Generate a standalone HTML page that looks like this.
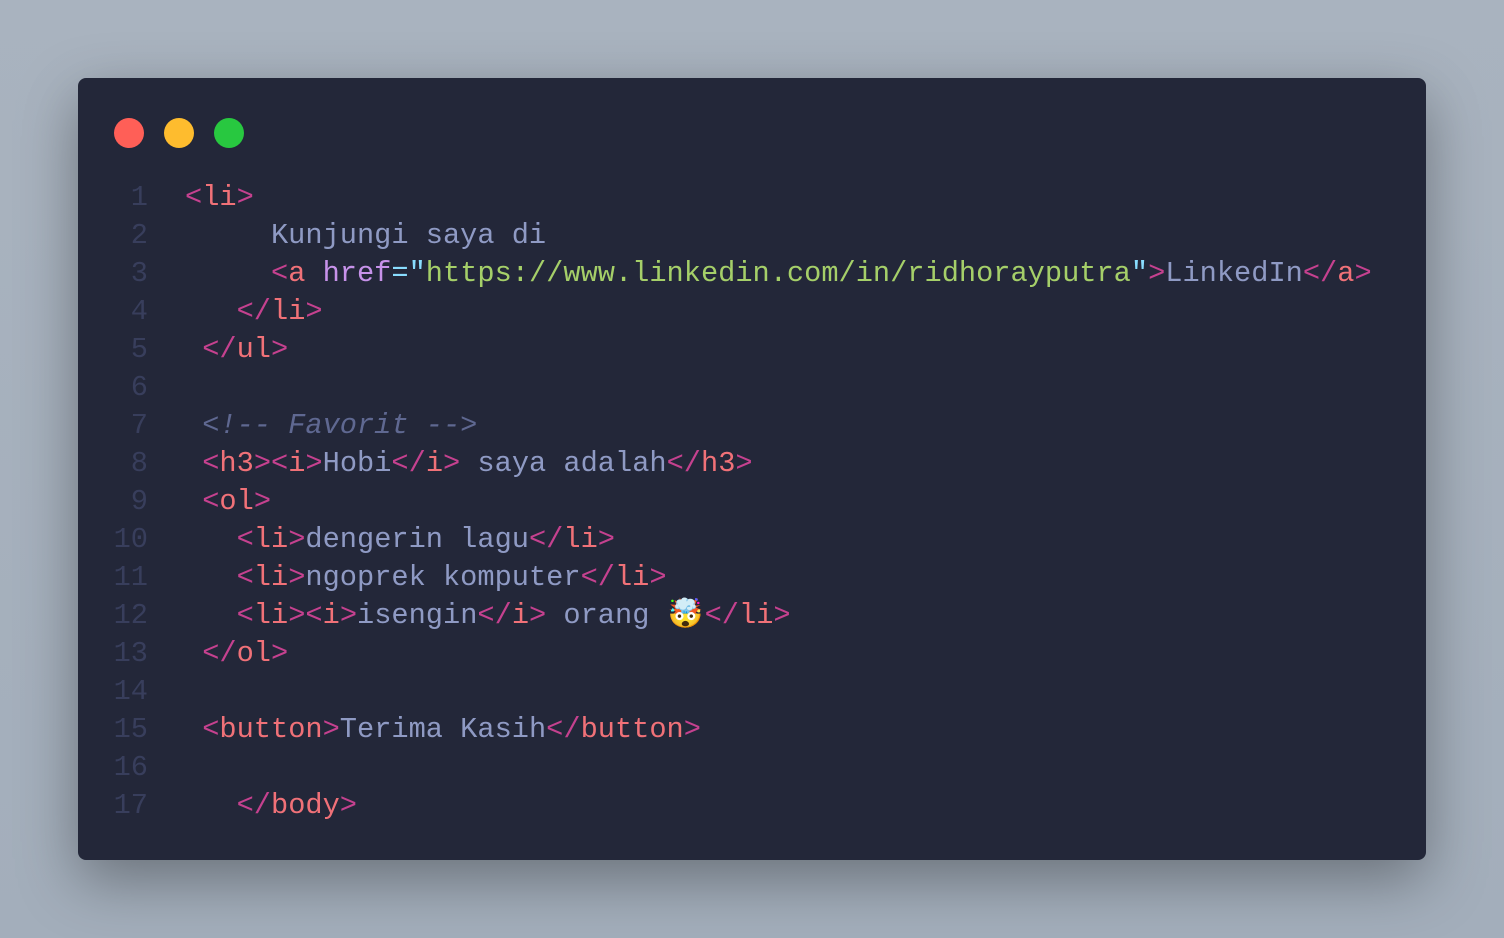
<html><head><style>
body{margin:0;width:1504px;height:938px;background:linear-gradient(180deg,#a9b3bf,#a3aebb);position:relative;overflow:hidden}
.win{position:absolute;left:78px;top:78px;width:1348px;height:782px;background:#232739;border-radius:8px;box-shadow:0 20px 60px rgba(0,0,0,.35)}
.dot{position:absolute;top:40px;width:30px;height:30px;border-radius:50%}
pre{position:absolute;left:0;top:101px;margin:0;font-family:"Liberation Mono",monospace;font-size:28.67px;line-height:38px;color:#8f9ac4}
.n{display:inline-block;width:70px;text-align:right;color:#383e5c;margin-right:37px}
.b{color:#c5418f}.t{color:#f07178}.a{color:#c792ea}.e{color:#89ddff}.s{color:#a5cf69}.c{color:#5f6891;font-style:italic}
</style></head><body><div class="win">
<div class="dot" style="left:36px;background:#ff5f57"></div>
<div class="dot" style="left:86px;background:#febc2e"></div>
<div class="dot" style="left:136px;background:#28c840"></div>
<pre><span class="n">1</span><span class="b">&lt;</span><span class="t">li</span><span class="b">&gt;</span>
<span class="n">2</span>     Kunjungi saya di
<span class="n">3</span>     <span class="b">&lt;</span><span class="t">a</span> <span class="a">href</span><span class="e">="</span><span class="s">https://www.linkedin.com/in/ridhorayputra</span><span class="e">"</span><span class="b">&gt;</span>LinkedIn<span class="b">&lt;/</span><span class="t">a</span><span class="b">&gt;</span>
<span class="n">4</span>   <span class="b">&lt;/</span><span class="t">li</span><span class="b">&gt;</span>
<span class="n">5</span> <span class="b">&lt;/</span><span class="t">ul</span><span class="b">&gt;</span>
<span class="n">6</span>
<span class="n">7</span> <span class="c">&lt;!-- Favorit --&gt;</span>
<span class="n">8</span> <span class="b">&lt;</span><span class="t">h3</span><span class="b">&gt;&lt;</span><span class="t">i</span><span class="b">&gt;</span>Hobi<span class="b">&lt;/</span><span class="t">i</span><span class="b">&gt;</span> saya adalah<span class="b">&lt;/</span><span class="t">h3</span><span class="b">&gt;</span>
<span class="n">9</span> <span class="b">&lt;</span><span class="t">ol</span><span class="b">&gt;</span>
<span class="n">10</span>   <span class="b">&lt;</span><span class="t">li</span><span class="b">&gt;</span>dengerin lagu<span class="b">&lt;/</span><span class="t">li</span><span class="b">&gt;</span>
<span class="n">11</span>   <span class="b">&lt;</span><span class="t">li</span><span class="b">&gt;</span>ngoprek komputer<span class="b">&lt;/</span><span class="t">li</span><span class="b">&gt;</span>
<span class="n">12</span>   <span class="b">&lt;</span><span class="t">li</span><span class="b">&gt;&lt;</span><span class="t">i</span><span class="b">&gt;</span>isengin<span class="b">&lt;/</span><span class="t">i</span><span class="b">&gt;</span> orang <span style="display:inline-block;width:38px;text-align:center">🤯</span><span class="b">&lt;/</span><span class="t">li</span><span class="b">&gt;</span>
<span class="n">13</span> <span class="b">&lt;/</span><span class="t">ol</span><span class="b">&gt;</span>
<span class="n">14</span>
<span class="n">15</span> <span class="b">&lt;</span><span class="t">button</span><span class="b">&gt;</span>Terima Kasih<span class="b">&lt;/</span><span class="t">button</span><span class="b">&gt;</span>
<span class="n">16</span>
<span class="n">17</span>   <span class="b">&lt;/</span><span class="t">body</span><span class="b">&gt;</span></pre>
</div></body></html>
